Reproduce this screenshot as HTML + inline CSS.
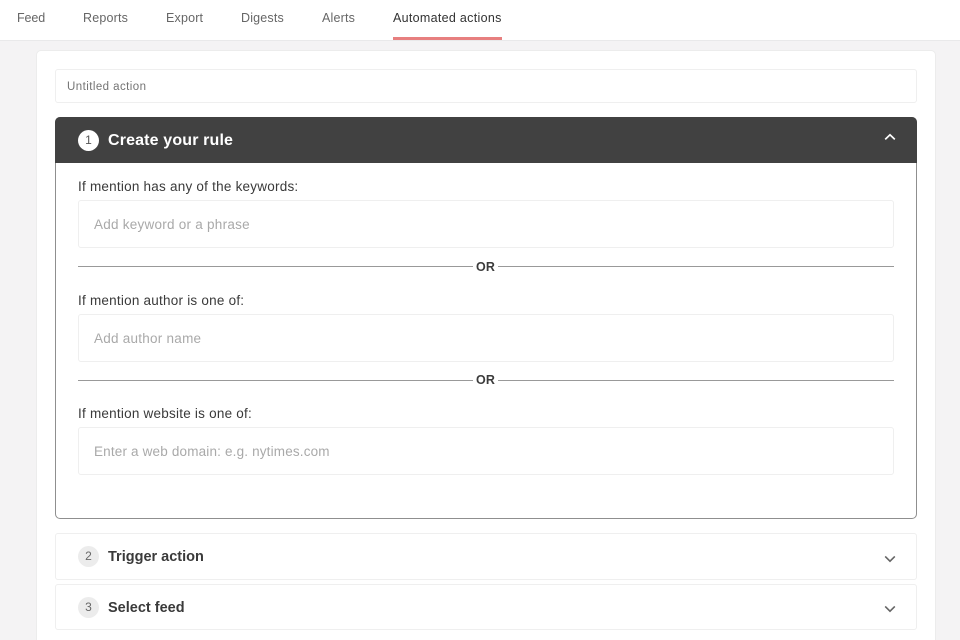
<!DOCTYPE html>
<html><head><meta charset="utf-8"><style>
html,body{margin:0;padding:0;width:960px;height:640px;overflow:hidden;background:#f4f3f4;font-family:"Liberation Sans",sans-serif}
#w{position:absolute;left:0;top:0;width:960px;height:640px;overflow:hidden;filter:blur(.3px)}
.a{position:absolute;box-sizing:border-box}
.t{position:absolute;white-space:nowrap;line-height:16px}
.nav{font-size:12.5px;color:#666;top:10px;letter-spacing:.18px}
.box{background:#fff;border:1px solid #efefef;border-radius:3px}
.lab{font-size:13.5px;color:#3a3a3a;left:78px;letter-spacing:.23px}
.ph{font-size:13.5px;color:#a9a9a9;left:94px;letter-spacing:.25px}
.ln{height:1px;background:#999;position:absolute}
.or{font-size:12.5px;font-weight:bold;color:#3c3c3c;left:476px;letter-spacing:.2px}
.h{font-size:14.5px;font-weight:bold;color:#3a3a3a;left:108px;letter-spacing:0}
.c{position:absolute;left:78px;width:21px;height:21px;border-radius:50%;background:#ececec;color:#666;font-size:12px;line-height:21px;text-align:center}
</style></head><body><div id="w">
<div class="a" style="left:0;top:0;width:960px;height:41px;background:#fff;border-bottom:1px solid #e9e9ea"></div>
<div class="t nav" style="left:17px;letter-spacing:-.1px">Feed</div>
<div class="t nav" style="left:83px">Reports</div>
<div class="t nav" style="left:166px">Export</div>
<div class="t nav" style="left:241px">Digests</div>
<div class="t nav" style="left:322px">Alerts</div>
<div class="t nav" style="left:393px;color:#333;letter-spacing:.3px">Automated actions</div>
<div class="a" style="left:393px;top:37px;width:109px;height:3px;background:#e77f7f"></div>

<div class="a" style="left:36px;top:50px;width:900px;height:600px;background:#fff;border:1px solid #ececec;border-radius:5px"></div>
<div class="a box" style="left:55px;top:69px;width:862px;height:34px"></div>
<div class="t" style="left:67px;top:79px;font-size:11.5px;color:#747474;letter-spacing:.44px">Untitled action</div>

<div class="a" style="left:55px;top:117px;width:862px;height:402px;background:#fff;border:1px solid #8f8f8f;border-radius:5px"></div>
<div class="a" style="left:55px;top:117px;width:862px;height:46px;background:#414141;border-radius:5px 5px 0 0"></div>
<div class="a" style="left:78px;top:130px;width:21px;height:21px;border-radius:50%;background:#fff;color:#555;font-size:12px;line-height:21px;text-align:center">1</div>
<div class="t" style="left:108px;top:133px;font-size:16px;font-weight:bold;color:#fff;letter-spacing:.15px">Create your rule</div>
<svg class="a" style="left:883px;top:132px" width="14" height="10" viewBox="0 0 14 10"><path d="M2.2 7.4 7 2.8l4.8 4.6" fill="none" stroke="#fff" stroke-width="1.7"/></svg>

<div class="t lab" style="top:179px">If mention has any of the keywords:</div>
<div class="a box" style="left:78px;top:200px;width:816px;height:48px"></div>
<div class="t ph" style="top:217px">Add keyword or a phrase</div>
<div class="ln" style="left:78px;top:266px;width:395px"></div>
<div class="ln" style="left:498px;top:266px;width:396px"></div>
<div class="t or" style="top:259px">OR</div>

<div class="t lab" style="top:293px">If mention author is one of:</div>
<div class="a box" style="left:78px;top:314px;width:816px;height:48px"></div>
<div class="t ph" style="top:331px">Add author name</div>
<div class="ln" style="left:78px;top:380px;width:395px"></div>
<div class="ln" style="left:498px;top:380px;width:396px"></div>
<div class="t or" style="top:372px">OR</div>

<div class="t lab" style="top:406px">If mention website is one of:</div>
<div class="a box" style="left:78px;top:427px;width:816px;height:48px"></div>
<div class="t ph" style="top:444px;letter-spacing:.17px">Enter a web domain: e.g. nytimes.com</div>

<div class="a box" style="left:55px;top:533px;width:862px;height:47px"></div>
<div class="c" style="top:546px">2</div>
<div class="t h" style="top:549px">Trigger action</div>
<svg class="a" style="left:883px;top:554px" width="14" height="10" viewBox="0 0 14 10"><path d="M2.2 2.4 7 7.2l4.8-4.8" fill="none" stroke="#666" stroke-width="1.6"/></svg>

<div class="a box" style="left:55px;top:584px;width:862px;height:46px"></div>
<div class="c" style="top:597px">3</div>
<div class="t h" style="top:600px">Select feed</div>
<svg class="a" style="left:883px;top:604px" width="14" height="10" viewBox="0 0 14 10"><path d="M2.2 2.4 7 7.2l4.8-4.8" fill="none" stroke="#666" stroke-width="1.6"/></svg>
</div></body></html>
